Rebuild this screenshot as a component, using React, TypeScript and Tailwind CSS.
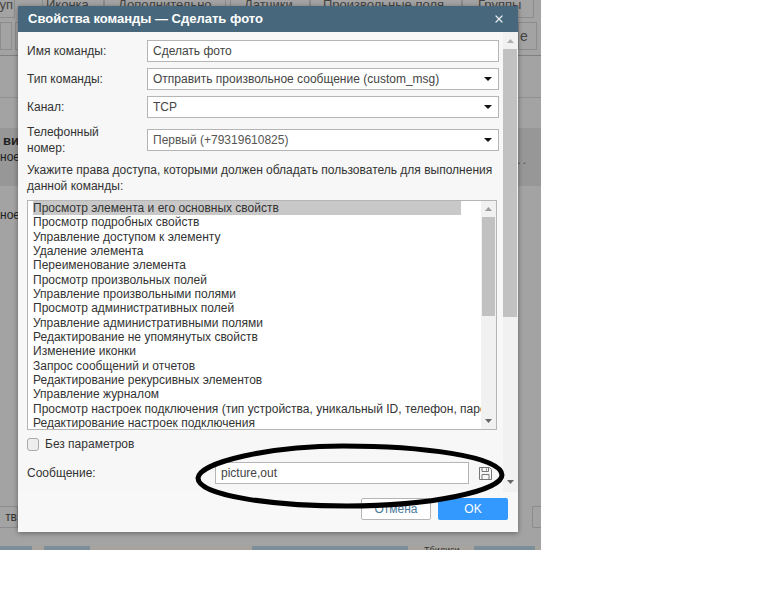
import React from 'react';
import { X } from 'lucide-react';

const perms = [
  'Просмотр элемента и его основных свойств',
  'Просмотр подробных свойств',
  'Управление доступом к элементу',
  'Удаление элемента',
  'Переименование элемента',
  'Просмотр произвольных полей',
  'Управление произвольными полями',
  'Просмотр административных полей',
  'Управление административными полями',
  'Редактирование не упомянутых свойств',
  'Изменение иконки',
  'Запрос сообщений и отчетов',
  'Редактирование рекурсивных элементов',
  'Управление журналом',
  'Просмотр настроек подключения (тип устройства, уникальный ID, телефон, пароль)',
  'Редактирование настроек подключения',
];

const Caret = () => (
  <svg width="8" height="4" viewBox="0 0 8 4" className="shrink-0">
    <path d="M0 0h8L4 4z" fill="#111" />
  </svg>
);

const Select = ({ value, muted }: { value: string; muted?: boolean }) => (
  <div className="flex h-[22px] w-[352px] items-center justify-between border border-[#b5b5b5] bg-white pl-[5px] pr-[6px]">
    <span className={muted ? 'text-[#555]' : 'text-[#444]'}>{value}</span>
    <Caret />
  </div>
);

const Arrow = ({ up, color = '#9a9a9a' }: { up?: boolean; color?: string }) => (
  <svg width="7" height="4" viewBox="0 0 7 4">
    <path d={up ? 'M0 4h7L3.5 0z' : 'M0 0h7L3.5 4z'} fill={color} />
  </svg>
);

const Tab = ({ label, className }: { label: string; className: string }) => (
  <div className={`flex h-[18px] shrink-0 border-x border-b border-[#8c8c8c] text-[13px] leading-[9px] text-[#444] ${className}`}>
    {label}
  </div>
);

export default function App() {
  return (
    <div className="h-[614px] w-[768px] bg-white font-['Liberation_Sans',Arial,sans-serif] text-[12px] leading-[14px] text-[#333]">
      <div className="relative flex h-[550px] w-[541px] flex-col overflow-hidden bg-[#a3a3a3]">
        {/* page behind the dialog */}
        <div className="flex h-[18px] shrink-0">
          <div className="flex h-[18px] w-[15px] shrink-0 justify-end border-r border-b border-[#8c8c8c] pr-[1px] text-[13px] leading-[9px] text-[#444]">уп</div>
          <Tab label="Иконка" className="ml-[27px] w-[62px] pl-[3px]" />
          <Tab label="Дополнительно" className="w-[122px] pl-[13px]" />
          <Tab label="Датчики" className="ml-[4px] w-[80px] pl-[13px]" />
          <Tab label="Произвольные поля" className="w-[152px] pl-[12px]" />
          <Tab label="Группы" className="w-[72px] pl-[15px]" />
        </div>
        <div className="flex h-[38px] shrink-0 justify-between border-b border-[#808080] pt-[4px]">
          <div className="flex gap-[3px]">
            <div className="h-[28px] w-[12px] border border-[#8c8c8c]" />
            <div className="h-[28px] w-[12px] border border-[#8c8c8c]" />
          </div>
          <div className="mr-[4px] h-[28px] w-[19px] border border-[#8c8c8c] pl-[1px] text-[14px] leading-[26px] text-[#444]">e</div>
        </div>
        <div className="h-[42px] shrink-0 border-b border-[#909090]" />
        <div className="mt-[30px] flex h-[58px] shrink-0 justify-between bg-[#979797] pt-[5px] leading-[16px] text-[#222]">
          <div>
            <div className="pl-[3px] text-[13px] font-bold">ви,</div>
            <div>ное</div>
          </div>
          <div className="mr-[13px] pt-[19px] tracking-[2px] text-[#444]">...</div>
        </div>
        <div className="mt-[21px] leading-[16px] text-[#222]">ное</div>

        <div className="mt-auto flex h-[22px] shrink-0 justify-between">
          <div className="h-[22px] w-[18px] border border-l-0 border-[#8c8c8c] text-right leading-[20px] text-[#333]">тв</div>
          <div className="h-[22px] w-[9px] rounded-l-[2px] border border-r-0 border-[#8c8c8c]" />
        </div>
        {/* map strip at the bottom of the page */}
        <div className="mt-[18px] flex h-[4px] shrink-0 overflow-hidden bg-[#a6a49c] text-[9px] leading-[9px] text-[#333]">
          <div className="w-[32px] bg-[#7b8e99]" />
          <div className="ml-[12px] w-[46px] bg-[#7b8e99]" />
          <div className="ml-[162px] w-[156px] bg-[#7b8e99]" />
          <div className="w-[66px] pl-[16px]">Тбилиси</div>
          <div className="w-[61px] bg-[#7b8e99]" />
        </div>

        {/* dialog */}
        <div className="absolute left-[18px] top-[6px] flex h-[526px] w-[500px] flex-col bg-[#f8f8f8] shadow-[0_1px_5px_rgba(0,0,0,0.4)]">
          <div className="flex h-[26px] shrink-0 items-center justify-between bg-[#47687c] pl-[10px] pr-[13px]">
            <span className="text-[13px] font-bold text-white">Свойства команды — Сделать фото</span>
            <X size={12} strokeWidth={2.5} className="text-[#e6ecef]" />
          </div>

          <div className="flex h-[460px] shrink-0 bg-[#f7f7f7]">
            <div className="w-[485px] shrink-0 pl-[9px] pt-[8px]">
              <div className="flex h-[22px] w-[472px] items-center justify-between">
                <span>Имя команды:</span>
                <div className="flex h-[22px] w-[352px] items-center border border-[#b5b5b5] bg-white pl-[5px] text-[#444]">Сделать фото</div>
              </div>
              <div className="mt-[6px] flex h-[22px] w-[472px] items-center justify-between">
                <span>Тип команды:</span>
                <Select value="Отправить произвольное сообщение (custom_msg)" />
              </div>
              <div className="mt-[6px] flex h-[22px] w-[472px] items-center justify-between">
                <span>Канал:</span>
                <Select value="TCP" />
              </div>
              <div className="mt-[11px] flex h-[22px] w-[472px] items-center justify-between">
                <span className="leading-[16px]">Телефонный<br />номер:</span>
                <Select value="Первый (+79319610825)" muted />
              </div>
              <div className="mt-[11px] w-[472px] leading-[16px]">
                Укажите права доступа, которыми должен обладать пользователь для выполнения данной команды:
              </div>
              <div className="mt-[6px] flex h-[230px] w-[470px] border border-[#b5b5b5] bg-white">
                <div className="w-[453px] shrink-0 overflow-hidden pl-[5px]">
                  {perms.map((p, i) => (
                    <div key={p} className={`h-[14.33px] w-[428px] whitespace-nowrap leading-[14.33px] ${i === 0 ? 'bg-[#c8c8c8]' : ''}`}>{p}</div>
                  ))}
                </div>
                <div className="flex w-[15px] flex-col items-center bg-[#f1f1f1]">
                  <div className="flex h-[16px] items-center"><Arrow up /></div>
                  <div className="h-[99px] w-[13px] bg-[#c1c1c1]" />
                  <div className="mt-auto flex h-[16px] items-center"><Arrow color="#666" /></div>
                </div>
              </div>
              <div className="mt-[7px] flex h-[14px] items-center gap-[6px]">
                <span className="h-[13px] w-[12px] rounded-[3px] border border-[#aaa] bg-[#eee]" />
                <span>Без параметров</span>
              </div>
              <div className="mt-[11px] flex h-[22px] items-center">
                <span className="w-[188px] shrink-0">Сообщение:</span>
                <div className="flex h-[22px] w-[254px] items-center border border-[#b5b5b5] bg-white pl-[5px] text-[#444]">picture,out</div>
                <svg width="13" height="13" viewBox="0 0 13 13" className="ml-[10px]" fill="none" stroke="#777" strokeWidth="1">
                  <path d="M.5.5h10l2 2v10H.5z" />
                  <path d="M3 .5v4h6.500v-4M3 12.500v-5h7v5M7.500 1.500v2" />
                </svg>
              </div>
            </div>
            <div className="flex w-[15px] flex-col bg-[#f1f1f1]">
              <div className="flex h-[17px] w-[14px] items-center justify-center"><Arrow up color="#b0b0b0" /></div>
              <div className="h-[268px] w-[14px] bg-[#c1c1c1]" />
              <div className="mt-auto flex h-[20px] w-[14px] items-center justify-center"><Arrow color="#666" /></div>
            </div>
          </div>

          <div className="flex flex-1 items-start justify-end gap-[7px] pr-[10px] pt-[6px]">
            <div className="flex h-[22px] w-[70px] items-center justify-center rounded-[2px] border border-[#b5b5b5] bg-white text-[#4a7a9c]">Отмена</div>
            <div className="flex h-[22px] w-[70px] items-center justify-center rounded-[2px] bg-[#3399ff] text-white">OK</div>
          </div>
        </div>

        {/* hand drawn ellipse */}
        <svg width="320" height="70" viewBox="193 441 320 70" className="absolute left-[193px] top-[441px]" fill="none">
          <path
            d="M198 478C200 462 270 446 343 446C420 446 502 456 502 475C502 491 430 506 347 506C280 506 198 497 198 478Z"
            stroke="#000"
            strokeWidth="5"
          />
        </svg>
      </div>
    </div>
  );
}
